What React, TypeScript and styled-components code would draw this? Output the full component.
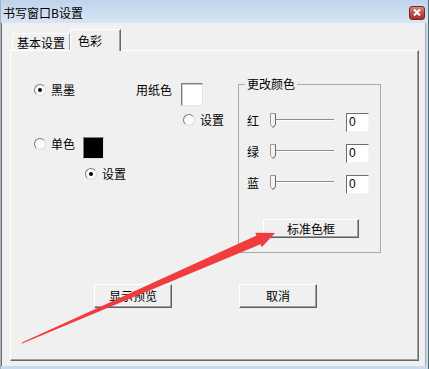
import styled, { createGlobalStyle } from 'styled-components'

const GlobalStyle = createGlobalStyle`
  html, body {
    margin: 0;
    padding: 0;
    overflow: hidden;
  }
  body {
    font-family: 'Noto Sans CJK SC', 'Liberation Sans', sans-serif;
    font-size: 12px;
    color: #000;
  }
`

function Radio({ label, checked }: { label: string; checked?: boolean }) {
  return (
    <RadioOption>
      <RadioCircle>{checked && <RadioDot />}</RadioCircle>
      <span>{label}</span>
    </RadioOption>
  )
}

function Slider() {
  return (
    <svg width="68" height="19" viewBox="0 0 68 19">
      <line x1="3" y1="6.5" x2="66" y2="6.5" stroke="#8c8c8c" />
      <line x1="3" y1="7.5" x2="66" y2="7.5" stroke="#ffffff" />
      <path d="M2.5 0.5 H7.5 V11.5 L5 14.5 L2.5 11.5 Z" fill="#f4f4f4" stroke="#9a9a9a" />
      <path d="M7.5 0.5 V11.5 L5 14.5" fill="none" stroke="#6a6a6a" />
    </svg>
  )
}

export default function App() {
  const channels = ['红', '绿', '蓝']

  return (
    <>
      <GlobalStyle />
      <Window>
        <TitleBar>
          <TitleText>书写窗口B设置</TitleText>
          <CloseButton>
            <svg width="8" height="7" viewBox="0 0 8 7">
              <path d="M1 0.5 L7 6.5 M7 0.5 L1 6.5" stroke="#fff" strokeWidth="2" />
            </svg>
          </CloseButton>
        </TitleBar>

        <Client>
          <TabStrip>
            <Tab>基本设置</Tab>
            <Tab selected>色彩</Tab>
          </TabStrip>

          <Panel>
            <Upper>
              <LeftArea>
                <Row>
                  <OptionSlot width={102}>
                    <Radio label="黑墨" checked />
                  </OptionSlot>
                  <FieldLabel>用纸色</FieldLabel>
                  <Swatch color="#ffffff" w={22} h={23} />
                </Row>
                <Row indent={149} top={7}>
                  <Radio label="设置" />
                </Row>
                <Row top={10}>
                  <OptionSlot width={49}>
                    <Radio label="单色" />
                  </OptionSlot>
                  <Swatch color="#000000" w={21} h={22} />
                </Row>
                <Row indent={51} top={8}>
                  <Radio label="设置" checked />
                </Row>
              </LeftArea>

              <GroupBox>
                <GroupLegend>更改颜色</GroupLegend>
                {channels.map(name => (
                  <SliderRow key={name}>
                    <ChannelLabel>{name}</ChannelLabel>
                    <Slider />
                    <EditBox>0</EditBox>
                  </SliderRow>
                ))}
                <PushButton width={96} height={19} style={{ marginTop: 25, marginLeft: 18 }}>
                  标准色框
                </PushButton>
              </GroupBox>
            </Upper>

            <ButtonRow>
              <PushButton width={78} height={24}>显示预览</PushButton>
              <PushButton width={78} height={24}>取消</PushButton>
            </ButtonRow>
          </Panel>
        </Client>

        <ArrowLayer width="429" height="369" viewBox="0 0 429 369">
          <polygon
            points="21,344 23,342 256.5,235.5 255.3,232.7 275,233 261.7,247.3 260.5,244.3"
            fill="#f03c3c"
          />
        </ArrowLayer>
      </Window>
    </>
  )
}

const Window = styled.div`
  position: relative;
  width: 429px;
  height: 369px;
  box-sizing: border-box;
  display: flex;
  flex-direction: column;
  background: #c9daee;
  border-left: 1px solid #9fb3c9;
  border-right: 1px solid #4f6f74;
`

const TitleBar = styled.div`
  height: 23px;
  flex: none;
  display: flex;
  align-items: center;
  justify-content: space-between;
  padding: 0 3px 0 2px;
  background: linear-gradient(180deg, #bfd3eb 0%, #cfdef0 60%, #d8e5f3 100%);
`

const TitleText = styled.div`
  font-size: 12px;
  line-height: 14px;
  margin-top: 2px;
  color: #000;
`

const CloseButton = styled.div`
  width: 16px;
  height: 14px;
  box-sizing: border-box;
  display: flex;
  align-items: center;
  justify-content: center;
  border: 1px solid #6e2b25;
  border-radius: 3px;
  background: linear-gradient(180deg, #d98a80 0%, #c2514a 50%, #a7302a 100%);
  margin-top: 2px;
`

const Client = styled.div`
  flex: 1;
  display: flex;
  flex-direction: column;
  margin: 0 2px 3px 0;
  padding: 6px 6px 5px 8px;
  background: #f0f0f0;
  border-left: 1px solid #6d6d6d;
  border-right: 1px solid #a8a8a8;
`

const TabStrip = styled.div`
  height: 21px;
  flex: none;
  display: flex;
  align-items: flex-end;
  padding-left: 2px;
  position: relative;
  z-index: 1;
`

const Tab = styled.div<{ selected?: boolean }>`
  box-sizing: border-box;
  height: ${p => (p.selected ? '22px' : '17px')};
  margin-bottom: ${p => (p.selected ? '-1px' : '0')};
  width: ${p => (p.selected ? '51px' : '58px')};
  padding-left: ${p => (p.selected ? '7px' : '4px')};
  padding-top: ${p => (p.selected ? '4px' : '2px')};
  line-height: 14px;
  background: #f0f0f0;
  border-top: 1px solid #ffffff;
  border-left: 1px solid #ffffff;
  border-right: 1px solid ${p => (p.selected ? '#696969' : '#a0a0a0')};
  box-shadow: ${p => (p.selected ? 'inset -1px 0 0 #a0a0a0' : 'none')};
`

const Panel = styled.div`
  flex: 1;
  display: flex;
  flex-direction: column;
  box-sizing: border-box;
  background: #f0f0f0;
  border-top: 1px solid #ffffff;
  border-left: 1px solid #ffffff;
  border-right: 1px solid #696969;
  border-bottom: 1px solid #696969;
  box-shadow: inset -1px -1px 0 #a0a0a0;
`

const Upper = styled.div`
  display: flex;
  margin-top: 25px;
  padding-left: 23px;
`

const LeftArea = styled.div`
  width: 204px;
  padding-top: 7px;
  display: flex;
  flex-direction: column;
`

const Row = styled.div<{ indent?: number; top?: number }>`
  display: flex;
  align-items: flex-start;
  padding-left: ${p => p.indent ?? 0}px;
  margin-top: ${p => p.top ?? 0}px;
`

const OptionSlot = styled.div<{ width: number }>`
  width: ${p => p.width}px;
  flex: none;
`

const RadioOption = styled.label`
  display: flex;
  align-items: center;
  gap: 5px;
  height: 14px;
  line-height: 14px;
`

const RadioCircle = styled.span`
  width: 12px;
  height: 12px;
  box-sizing: border-box;
  border-radius: 50%;
  border: 1px solid;
  border-color: #7c7c7c #dcdcdc #dcdcdc #7c7c7c;
  background: #fbfbfb;
  display: flex;
  align-items: center;
  justify-content: center;
`

const RadioDot = styled.span`
  width: 4px;
  height: 4px;
  border-radius: 50%;
  background: #000;
`

const FieldLabel = styled.span`
  width: 36px;
  margin-right: 9px;
  line-height: 14px;
`

const Swatch = styled.div<{ color: string; w: number; h: number }>`
  width: ${p => p.w}px;
  height: ${p => p.h}px;
  box-sizing: border-box;
  background: ${p => p.color};
  border: 1px solid;
  border-color: #808080 #e4e4e4 #e4e4e4 #808080;
  box-shadow: ${p => (p.color === '#000000' ? 'none' : 'inset 1px 1px 0 #c8c8c8')};
`

const GroupBox = styled.fieldset`
  width: 143px;
  box-sizing: border-box;
  margin: 0;
  padding: 21px 0 14px 6px;
  border: 1px solid #a9a9a9;
  display: flex;
  flex-direction: column;
  min-width: 0;
`

const GroupLegend = styled.legend`
  padding: 0 2px;
  line-height: 16px;
`

const SliderRow = styled.div`
  display: flex;
  align-items: center;
  height: 19px;
  padding-left: 2px;

  & + & {
    margin-top: 12px;
  }
`

const ChannelLabel = styled.span`
  width: 12px;
  margin-right: 9px;
  margin-top: -4px;
  line-height: 14px;
`

const EditBox = styled.div`
  width: 23px;
  height: 19px;
  box-sizing: border-box;
  margin-left: 10px;
  background: #ffffff;
  border: 1px solid;
  border-color: #6d6d6d #f4f4f4 #f4f4f4 #6d6d6d;
  font-family: 'Liberation Sans', sans-serif;
  font-size: 12px;
  line-height: 16px;
  padding-left: 2px;
`

const PushButton = styled.div<{ width: number; height: number }>`
  width: ${p => p.width}px;
  height: ${p => p.height}px;
  box-sizing: border-box;
  display: flex;
  align-items: center;
  justify-content: center;
  background: #f0f0f0;
  border: 1px solid;
  border-color: #ffffff #5f5f5f #5f5f5f #ffffff;
  box-shadow: inset -1px -1px 0 #a0a0a0;
  line-height: 14px;
`

const ButtonRow = styled.div`
  display: flex;
  gap: 67px;
  margin-top: 31px;
  padding-left: 83px;
`

const ArrowLayer = styled.svg`
  position: absolute;
  left: -1px;
  top: 0;
  pointer-events: none;
`
